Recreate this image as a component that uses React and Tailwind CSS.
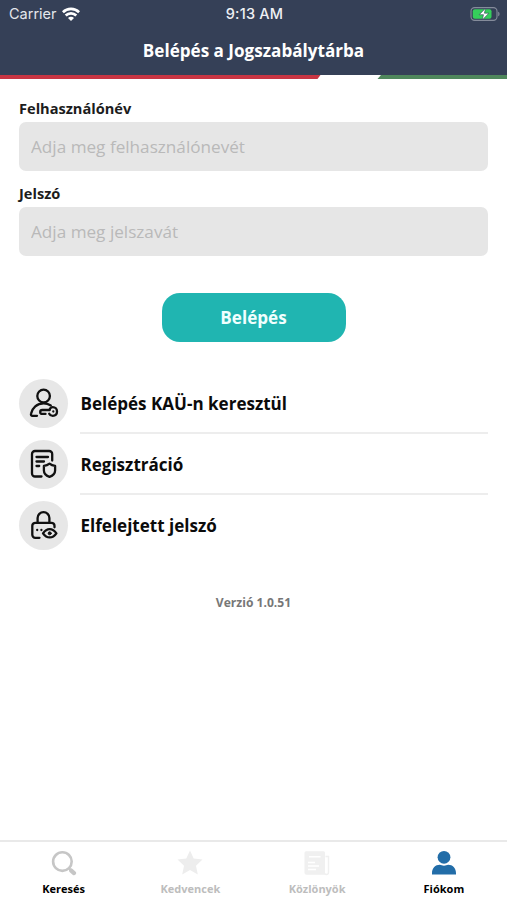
const UserKeyIcon = () => (
  <svg viewBox="0 0 49 49" className="size-full" fill="none" stroke="#111" strokeWidth="2.3" strokeLinecap="round" strokeLinejoin="round">
    <circle cx="24.6" cy="17" r="6.3" />
    <path d="M18 36.8h-4.500c-1.200 0-1.800-.8-1.500-2 1.200-6 6-10.400 12.600-10.400 2.600 0 5 .7 7.200 2" />
    <path d="M30.500 31h-7.200c-1.300 0-2.100.8-2.100 1.900s.8 2 2.100 2h3.200" />
    <path d="M30.500 31c.4-1.800 1.500-2.900 3.200-2.900 2.600 0 4.300 1.900 4.300 4.400s-1.700 4.300-4.300 4.300c-1.700 0-2.900-.7-3.500-2" />
    <path d="M34.300 32.400v.1" />
  </svg>
);

const DocumentShieldIcon = () => (
  <svg viewBox="0 0 49 49" className="size-full" fill="none" stroke="#111" strokeWidth="2.3" strokeLinecap="round" strokeLinejoin="round">
    <path d="M22.500 36.500H16a3 3 0 0 1-3-3V14a3 3 0 0 1 3-3h14.200a3 3 0 0 1 3 3v6.500" />
    <path d="M17.500 17H29M17.500 21.500H25M17.500 26h2.700" />
    <path d="M30.500 23.700c1.700 1.400 3.500 2 5.600 2.200v4.600c0 3-2.300 5.200-5.600 6.300-3.300-1.100-5.600-3.300-5.600-6.300v-4.600c2.100-.2 3.900-.8 5.600-2.200z" />
  </svg>
);

const LockEyeIcon = () => (
  <svg viewBox="0 0 49 49" className="size-full" fill="none" stroke="#111" strokeWidth="2.3" strokeLinecap="round" strokeLinejoin="round">
    <path d="M18.600 21.500V17a5.900 5.900 0 0 1 11.800 0v4.500" />
    <path d="M20.500 36.800h-4.200a3 3 0 0 1-3-3v-9a3 3 0 0 1 3-3h16.200a3 3 0 0 1 3 3v1.500" />
    <path d="M18.200 29v.1M22.400 29v.1" />
    <path d="M24 32.300c3.800-5.600 9.600-5.600 13.400 0-3.800 5.500-9.600 5.500-13.400 0z" />
    <circle cx="30.700" cy="32.300" r="1.500" fill="#111" strokeWidth="1" />
  </svg>
);

const SearchIcon = () => (
  <svg viewBox="0 0 26 26" className="size-[26px]" fill="none" stroke="#c6c6c6">
    <circle cx="11.4" cy="11.6" r="9.3" strokeWidth="2.6" />
    <path d="m18 18.300 2 2" strokeWidth="2" />
    <path d="m20.200 20.600 2.800 2.500" strokeWidth="4.2" strokeLinecap="round" />
  </svg>
);

const StarIcon = () => (
  <svg viewBox="0 0 26 26" className="size-[26px]" fill="#ededed">
    <path d="m13 .5 3.700 8.100 8.800 1-6.500 6.100 1.800 8.700-7.800-4.300-7.800 4.300L7 15.700.5 9.600l8.800-1z" />
  </svg>
);

const NewsIcon = () => (
  <svg viewBox="0 0 26 26" className="size-[26px]">
    <path d="M2 1.300h17.500A1.500 1.500 0 0 1 21 2.800v22H2.500a2 2 0 0 1-2-2v-20A1.500 1.500 0 0 1 2 1.300z" fill="#f0f0f0" />
    <path d="M21.500 6.500h3v15.800a2.200 2.200 0 0 1-4.400 0" fill="none" stroke="#f0f0f0" strokeWidth="1.4" />
    <path d="M5 6.800h11.500M4 12.500h7M4 16h11M4 19.500h8" stroke="#fff" strokeWidth="1.5" />
  </svg>
);

const AccountIcon = () => (
  <svg viewBox="0 0 26 26" className="size-[26px]" fill="#226da8">
    <circle cx="13" cy="7.3" r="6.4" />
    <path d="M1 24.400v-1.200c0-5.200 3.400-8.400 7.800-8.400 1.300 0 2.500 1 4.200 1s2.900-1 4.200-1c4.400 0 7.800 3.200 7.800 8.400v1.200z" />
  </svg>
);

const WifiIcon = () => (
  <svg viewBox="0 0 18 14" className="ml-[5px] h-[14px] w-[18px]" fill="none" stroke="#fff" strokeWidth="2.7">
    <path d="M.9 5.200a11.600 11.600 0 0 1 16.200 0" />
    <path d="M3.700 8.500a7.500 7.500 0 0 1 10.600 0" />
    <path d="M6 11a4.200 4.200 0 0 1 6 0l-3 3z" fill="#fff" stroke="none" />
  </svg>
);

const BatteryIcon = () => (
  <svg viewBox="0 0 30 14" className="h-[14px] w-[30px]">
    <rect x="1" y=".6" width="26" height="12.8" rx="3.6" fill="none" stroke="#858c9b" strokeWidth="1.1" />
    <rect x="2.8" y="2.3" width="18.7" height="9.4" rx="2" fill="#35ce5b" />
    <path d="M28.200 4.700c1.800.5 1.800 4.100 0 4.600z" fill="#858c9b" />
    <path d="M15.600 1.200 9.200 7.700h4.300l-1.200 5.200 6.600-6.700h-4.500z" fill="#fff" stroke="#33405a" strokeWidth=".6" />
  </svg>
);

const links = [
  { label: "Belépés KAÜ-n keresztül", Icon: UserKeyIcon },
  { label: "Regisztráció", Icon: DocumentShieldIcon },
  { label: "Elfelejtett jelszó", Icon: LockEyeIcon },
];

const tabs = [
  { label: "Keresés", Icon: SearchIcon, color: "text-black" },
  { label: "Kedvencek", Icon: StarIcon, color: "text-[#bdbdbd]" },
  { label: "Közlönyök", Icon: NewsIcon, color: "text-[#bdbdbd]" },
  { label: "Fiókom", Icon: AccountIcon, color: "text-black" },
];

const Header = () => (
  <header className="h-[79px] shrink-0 bg-[#354057] text-white">
    <div className="grid h-[27px] grid-cols-3 items-center pr-[7px] pl-[9px] font-['Inter',sans-serif] text-[14.5px]">
      <div className="flex items-center text-[#e4e7ec]">
        Carrier
        <WifiIcon />
      </div>
      <span className="text-center font-medium tracking-[0.2px] text-[#eef0f4]">9:13 AM</span>
      <div className="flex justify-end">
        <BatteryIcon />
      </div>
    </div>
    <h1 className="flex h-[48px] items-center justify-center text-[17.1px] font-bold">
      Belépés a Jogszabálytárba
    </h1>
    {/* Tricolour stripe */}
    <svg viewBox="0 0 507 4" className="block h-[4px] w-full" preserveAspectRatio="none">
      <path d="M0 0h507v4H0z" fill="#fff" />
      <path d="M0 0h320.500l-3 4H0z" fill="#c93543" />
      <path d="M381 0h126v4H377.500z" fill="#4f875c" />
    </svg>
  </header>
);

const Field = ({ id, label, placeholder, type }) => (
  <div>
    <label htmlFor={id} className="block h-[24px] text-[14.6px] leading-[20px] font-bold text-[#1c1c1c]">
      {label}
    </label>
    <input
      id={id}
      type={type}
      placeholder={placeholder}
      className="block h-[49px] w-full rounded-[7px] bg-[#e6e6e6] px-[12px] text-[17.15px] outline-none placeholder:text-[#b9b9b9]"
    />
  </div>
);

const App = () => {
  return (
    <div className="flex h-[900px] w-full flex-col overflow-hidden bg-white font-['Open_Sans',sans-serif]">
      <Header />

      <main className="flex-1 px-[19px] pt-[19px]">
        <form className="flex flex-col" onSubmit={(e) => e.preventDefault()}>
          <div className="flex flex-col gap-[12.4px]">
            <Field id="username" type="text" label="Felhasználónév" placeholder="Adja meg felhasználónevét" />
            <Field id="password" type="password" label="Jelszó" placeholder="Adja meg jelszavát" />
          </div>
          <button type="submit" className="mt-[36.6px] h-[49px] w-[184px] self-center rounded-[18px] bg-[#20b5b1] text-[17.1px] font-bold text-[#f0fffe]">
            Belépés
          </button>
        </form>

        <ul className="mt-[31px]">
          {links.map(({ label, Icon }) => (
            <li key={label} className="group flex h-[61px] items-center gap-[12px]">
              <div className="size-[49px] shrink-0 rounded-full bg-[#e7e7e7]">
                <Icon />
              </div>
              <div className="flex h-full flex-1 items-center border-b-2 border-[#ededed] pt-[2px] pl-[0.5px] text-[17.05px] font-bold text-[#0b0b0b] group-last:border-transparent">
                {label}
              </div>
            </li>
          ))}
        </ul>

        <p className="mt-[38px] text-center text-[12.1px] leading-[18px] font-bold text-[#777]">
          Verzió 1.0.51
        </p>
      </main>

      <nav className="grid h-[60px] shrink-0 grid-cols-4 border-t-2 border-[#e9e9e9]">
        {tabs.map(({ label, Icon, color }) => (
          <a key={label} href="#" className={`flex flex-col items-center pt-[8px] pl-[0.5px] text-[11px] font-bold ${color}`}>
            <Icon />
            <span className="mt-[5px] leading-[16px]">{label}</span>
          </a>
        ))}
      </nav>
    </div>
  );
};

export default App;
